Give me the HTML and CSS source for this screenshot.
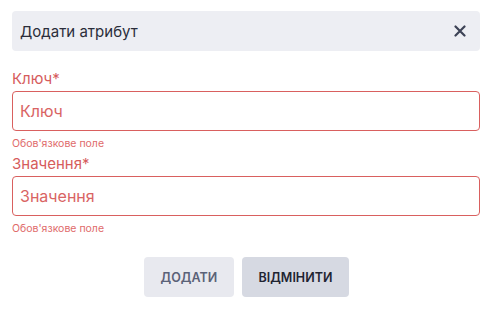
FILE: index.html
```html
<!DOCTYPE html>
<html lang="uk">
<head>
    <meta charset="UTF-8">
    <meta name="viewport" content="width=device-width, initial-scale=1.0">
    <title>Додати атрибут</title>
    <link rel="stylesheet" href="styles.css">
</head>
<body>
    <div class="dialog">
        <div class="dialog-header">
            <span class="dialog-title">Додати атрибут</span>
            <button type="button" class="close-btn" aria-label="Закрити">
                <svg width="12" height="12" viewBox="0 0 12 12">
                    <path d="M1.5 1.5 L10.5 10.5 M10.5 1.5 L1.5 10.5" stroke="#3d4256" stroke-width="2.2" stroke-linecap="round"/>
                </svg>
            </button>
        </div>
        <form id="attributeForm">
            <div class="form-group">
                <label for="key">Ключ*</label>
                <input type="text" id="key" name="key" placeholder="Ключ">
                <div class="field-error">Обов'язкове поле</div>
            </div>
            <div class="form-group">
                <label for="value">Значення*</label>
                <input type="text" id="value" name="value" placeholder="Значення">
                <div class="field-error">Обов'язкове поле</div>
            </div>
            <div class="actions">
                <button type="submit" class="btn btn-add">Додати</button>
                <button type="button" class="btn btn-cancel">Відмінити</button>
            </div>
        </form>
    </div>
</body>
</html>
```

FILE: styles.css
```css
body {
    font-family: Inter, "Noto Sans", sans-serif;
    margin: 0;
    padding: 0;
    background-color: #fff;
}

.dialog {
    padding: 11px 9px 0 12px;
}

.dialog-header {
    display: flex;
    align-items: center;
    justify-content: space-between;
    height: 40px;
    padding: 0 14px 0 8px;
    background-color: #edeef3;
    border-radius: 4px;
    margin-bottom: 18px;
}

.dialog-title {
    font-size: 15px;
    color: #2a2d3a;
}

.close-btn {
    display: flex;
    padding: 0;
    border: none;
    background: none;
    cursor: pointer;
}

.form-group {
    margin-bottom: 4px;
}

.form-group label {
    display: block;
    font-size: 15px;
    line-height: 20px;
    margin-bottom: 2px;
    color: #d65c5c;
}

.form-group input {
    display: block;
    width: 100%;
    height: 40px;
    padding: 0 7px;
    border: 1px solid #d9605f;
    border-radius: 4px;
    box-sizing: border-box;
    font-family: inherit;
    font-size: 16px;
    color: #d65c5c;
    outline: none;
}

.form-group input::placeholder {
    color: #d96464;
}

.field-error {
    margin-top: 6px;
    font-size: 10.5px;
    line-height: 13px;
    color: #e06a6a;
}

.actions {
    display: flex;
    justify-content: center;
    gap: 8px;
    margin-top: 22px;
}

.btn {
    height: 40px;
    padding: 0 17px;
    border: none;
    border-radius: 4px;
    font-family: inherit;
    font-size: 12.5px;
    font-weight: 600;
    text-transform: uppercase;
    cursor: pointer;
}

.btn-add {
    width: 90px;
    background-color: #e8e9ef;
    color: #5b6278;
}

.btn-cancel {
    width: 107px;
    background-color: #d6d9e2;
    color: #1f2432;
}
```
